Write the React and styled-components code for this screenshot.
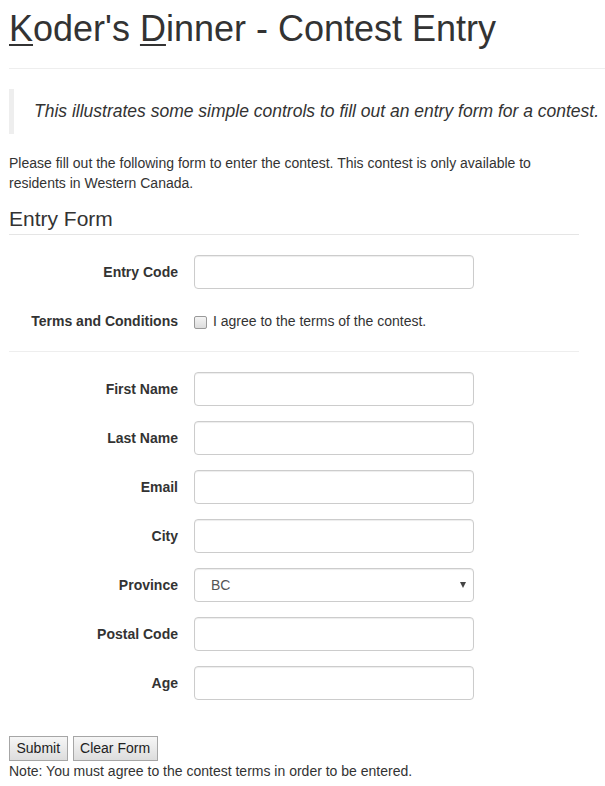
import styled, { createGlobalStyle } from 'styled-components';

const GlobalStyle = createGlobalStyle`
  * {
    box-sizing: border-box;
  }
  body {
    margin: 0;
    background: #fff;
    color: #333;
    font-family: "Liberation Sans", Arial, sans-serif;
    font-size: 14px;
    line-height: 1.42857;
  }
`;

const Page = styled.div`
  padding-left: 9px;
`;

const PageHeader = styled.header`
  padding-bottom: 9px;
  margin-bottom: 20px;
  border-bottom: 1px solid #eee;
`;

const Title = styled.h1`
  margin: 9px 0 10px;
  font-size: 36px;
  font-weight: 500;
  line-height: 1.1;
  color: #333;

  u {
    text-decoration-thickness: 2px;
    text-underline-offset: 3px;
  }
`;

const Content = styled.div`
  width: 570px;
`;

const Quote = styled.blockquote`
  margin: 0 0 20px;
  padding: 10px 20px;
  border-left: 5px solid #eee;
  font-size: 17.5px;
  font-style: italic;
  line-height: 25px;
  white-space: nowrap;
`;

const Intro = styled.p`
  margin: 0 0 10px;
`;

const Legend = styled.h2`
  margin: 0 0 20px;
  font-size: 21px;
  font-weight: 400;
  line-height: 30px;
  border-bottom: 1px solid #e5e5e5;
`;

const Group = styled.div`
  display: grid;
  grid-template-columns: 169px 280px;
  column-gap: 16px;
  align-items: center;
  margin-bottom: 15px;
`;

const Label = styled.label`
  text-align: right;
  font-weight: 700;
  padding-top: ${(p) => (p.$check ? 8 : 2)}px;
`;

const Input = styled.input`
  width: 280px;
  height: 34px;
  padding: 6px 12px;
  font: inherit;
  color: #555;
  background: #fff;
  border: 1px solid #ccc;
  border-radius: 4px;
  box-shadow: inset 0 1px 1px rgba(0, 0, 0, 0.075);
`;

const SelectBox = styled.div`
  position: relative;
  width: 280px;
  height: 34px;
  display: flex;
  align-items: center;
  padding: 2px 16px 0;
  color: #555;
  border: 1px solid #ccc;
  border-radius: 4px;
  box-shadow: inset 0 1px 1px rgba(0, 0, 0, 0.075);
`;

const Caret = styled.span`
  position: absolute;
  right: 7px;
  top: 13px;
  width: 0;
  height: 0;
  border-left: 3.5px solid transparent;
  border-right: 3.5px solid transparent;
  border-top: 6px solid #444;
`;

const CheckRow = styled.label`
  display: flex;
  align-items: center;
  gap: 6px;
  min-height: 27px;
  padding-top: 8px;
`;

const Box = styled.span`
  width: 13px;
  height: 13px;
  border: 1px solid #999;
  border-radius: 2px;
  background: linear-gradient(#f4f4f4, #dcdcdc);
  margin-top: 1px;
`;

const Divider = styled.hr`
  margin: 19px 0 20px;
  border: 0;
  border-top: 1px solid #eee;
`;

const Actions = styled.div`
  display: flex;
  gap: 5px;
  margin-top: 36px;
`;

const Button = styled.button`
  height: 25px;
  padding: 0 6.5px;
  font: 14px "Liberation Sans", Arial, sans-serif;
  color: #222;
  background: linear-gradient(#f6f6f6, #dddddd);
  border: 1px solid #a6a6a6;
  border-radius: 0;
`;

const Note = styled.p`
  margin: 1px 0 0;
`;

const fields = ['First Name', 'Last Name', 'Email', 'City'];

export default function App() {
  return (
    <Page>
      <GlobalStyle />
      <PageHeader>
        <Title>
          <u>K</u>oder's <u>D</u>inner - Contest Entry
        </Title>
      </PageHeader>
      <Content>
        <Quote>This illustrates some simple controls to fill out an entry form for a contest.</Quote>
        <Intro>
          Please fill out the following form to enter the contest. This contest is only available to
          residents in Western Canada.
        </Intro>
        <Legend>Entry Form</Legend>
        <Group>
          <Label>Entry Code</Label>
          <Input type="text" />
        </Group>
        <Group>
          <Label $check>Terms and Conditions</Label>
          <CheckRow>
            <Box />
            I agree to the terms of the contest.
          </CheckRow>
        </Group>
        <Divider />
        {fields.map((f) => (
          <Group key={f}>
            <Label>{f}</Label>
            <Input type="text" />
          </Group>
        ))}
        <Group>
          <Label>Province</Label>
          <SelectBox>
            BC
            <Caret />
          </SelectBox>
        </Group>
        <Group>
          <Label>Postal Code</Label>
          <Input type="text" />
        </Group>
        <Group>
          <Label>Age</Label>
          <Input type="text" />
        </Group>
      </Content>
      <Actions>
        <Button>Submit</Button>
        <Button>Clear Form</Button>
      </Actions>
      <Note>Note: You must agree to the contest terms in order to be entered.</Note>
    </Page>
  );
}
